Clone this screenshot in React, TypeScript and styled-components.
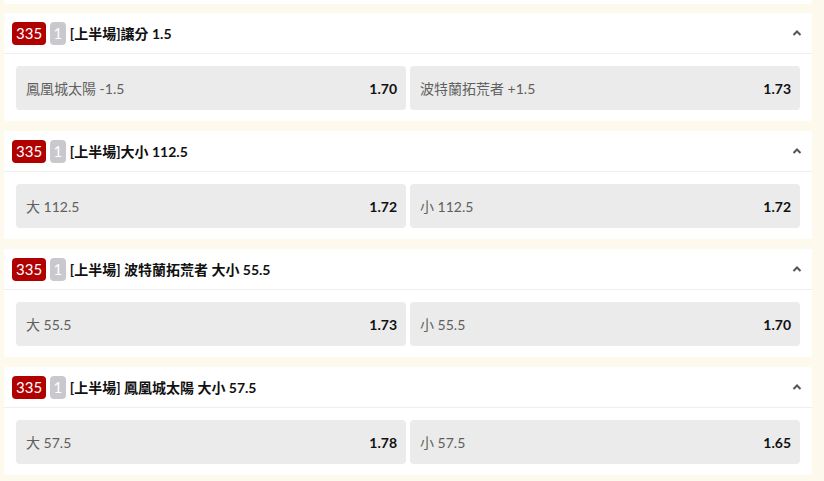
import styled, { createGlobalStyle } from "styled-components";

type Outcome = { label: string; odds: string };

type Market = {
  id: string;
  period: string;
  title: string;
  outcomes: Outcome[];
};

const markets: Market[] = [
  {
    id: "335",
    period: "1",
    title: "[上半場]讓分 1.5",
    outcomes: [
      { label: "鳳凰城太陽 -1.5", odds: "1.70" },
      { label: "波特蘭拓荒者 +1.5", odds: "1.73" },
    ],
  },
  {
    id: "335",
    period: "1",
    title: "[上半場]大小 112.5",
    outcomes: [
      { label: "大 112.5", odds: "1.72" },
      { label: "小 112.5", odds: "1.72" },
    ],
  },
  {
    id: "335",
    period: "1",
    title: "[上半場] 波特蘭拓荒者 大小 55.5",
    outcomes: [
      { label: "大 55.5", odds: "1.73" },
      { label: "小 55.5", odds: "1.70" },
    ],
  },
  {
    id: "335",
    period: "1",
    title: "[上半場] 鳳凰城太陽 大小 57.5",
    outcomes: [
      { label: "大 57.5", odds: "1.78" },
      { label: "小 57.5", odds: "1.65" },
    ],
  },
];

const GlobalStyle = createGlobalStyle`
  body {
    margin: 0;
    background: #fdfaed;
    font-family: "Lato", "Noto Sans CJK TC", sans-serif;
    overflow: hidden;
  }
`;

function Chevron() {
  return (
    <svg width="10" height="8" viewBox="0 0 10 8">
      <polyline
        points="1.5,6 5,2.5 8.5,6"
        fill="none"
        stroke="#555"
        strokeWidth="2"
      />
    </svg>
  );
}

function MarketCard(props: { market: Market }) {
  const { market } = props;
  return (
    <StyledCard>
      <div className="header">
        <Badge tone="red">{market.id}</Badge>
        <Badge tone="gray">{market.period}</Badge>
        <div className="title">{market.title}</div>
        <Chevron />
      </div>
      <div className="body">
        {market.outcomes.map((outcome, index) => (
          <OddsCell key={`outcome-${index}`}>
            <span className="label">{outcome.label}</span>
            <span className="odds">{outcome.odds}</span>
          </OddsCell>
        ))}
      </div>
    </StyledCard>
  );
}

export default function App() {
  return (
    <>
      <GlobalStyle />
      <StyledList>
        {/* list is scrolled: only the bottom edge of the previous card shows */}
        <ScrolledEdge />
        {markets.map((market, index) => (
          <MarketCard key={`market-${index}`} market={market} />
        ))}
      </StyledList>
    </>
  );
}

const StyledList = styled.div`
  display: flex;
  flex-direction: column;
  gap: 9px;
  width: 808px;
  padding-left: 4px;
  padding-bottom: 6px;
`;

const ScrolledEdge = styled.div`
  height: 4px;
  background: #fff;
  border-radius: 0 0 3px 3px;
`;

const StyledCard = styled.div`
  background: #fff;
  border-radius: 3px;
  & + & {
    margin-top: 1px;
  }
  .header {
    display: flex;
    align-items: center;
    height: 40px;
    padding: 0 10px 0 8px;
    border-bottom: 1px solid #eeeeee;
  }
  .title {
    flex: 1;
    font-size: 14px;
    font-weight: bold;
    color: #111;
  }
  .body {
    display: grid;
    grid-template-columns: 1fr 1fr;
    gap: 4px;
    padding: 12px 12px 11px;
  }
`;

const Badge = styled.span<{ tone: "red" | "gray" }>`
  display: inline-flex;
  align-items: center;
  justify-content: center;
  height: 23px;
  padding: 0 ${(p) => (p.tone === "red" ? "4px" : "3.5px")};
  margin-right: 4px;
  border-radius: 4px;
  font-size: 15px;
  color: #fff;
  background: ${(p) => (p.tone === "red" ? "#b00000" : "#c9c8cd")};
`;

const OddsCell = styled.div`
  display: flex;
  align-items: center;
  justify-content: space-between;
  height: 44px;
  padding: 0 9px 0 10px;
  border-radius: 4px;
  background: #ebebeb;
  font-size: 14px;
  .label {
    color: #5f5f5f;
  }
  .odds {
    font-weight: bold;
    color: #111;
  }
`;
